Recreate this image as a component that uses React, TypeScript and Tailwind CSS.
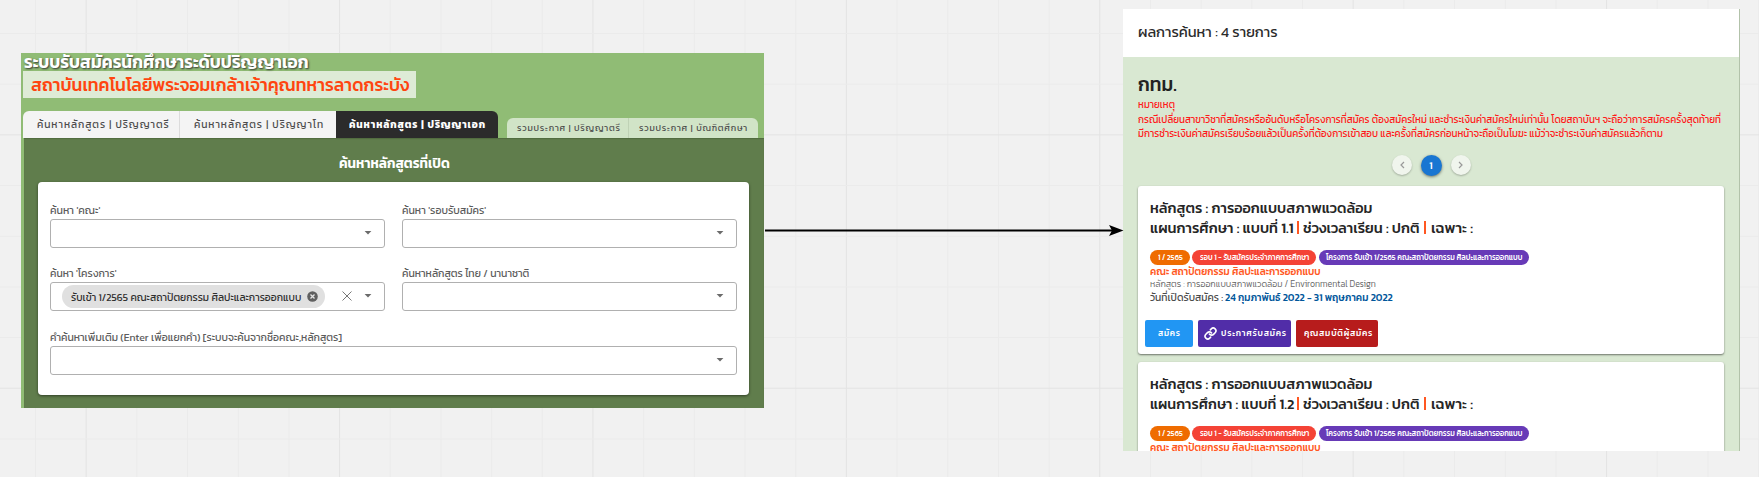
import { useLayoutEffect, useRef, useState, type ReactNode } from "react";

/* One line of text stretched to the width of its box. */
function Fit({ className, children }: { className: string; children: ReactNode }) {
  const box = useRef<HTMLSpanElement>(null);
  const text = useRef<HTMLSpanElement>(null);
  const [scale, setScale] = useState(1);
  useLayoutEffect(() => {
    if (box.current && text.current) {
      setScale(box.current.clientWidth / text.current.offsetWidth);
    }
  }, []);
  return (
    <span ref={box} className={`block shrink-0 whitespace-nowrap ${className}`}>
      <span ref={text} className="inline-block origin-left" style={{ transform: `scaleX(${scale})` }}>
        {children}
      </span>
    </span>
  );
}

const STEP = 50.68;

function CanvasGrid() {
  const xs = Array.from({ length: 36 }, (_, i) => i);
  const ys = Array.from({ length: 10 }, (_, i) => i);
  return (
    <svg className="absolute inset-0" width="1759" height="477" fill="none">
      {xs.map((i) => (
        <path key={i} d={`M${35.5 + (i * STEP)} 0V477`} stroke={i % 5 === 1 ? "#e3e3e3" : "#ebebeb"} />
      ))}
      {ys.map((i) => (
        <path key={i} d={`M0 ${33.5 + (i * STEP)}H1759`} stroke={i % 5 === 2 ? "#e3e3e3" : "#ebebeb"} />
      ))}
    </svg>
  );
}

function Caret() {
  return (
    <svg width="8" height="4" viewBox="0 0 8 4" className="mb-[2px] shrink-0">
      <path d="M0.6 0H7.4L4 3.6Z" fill="#6b6b6b" />
    </svg>
  );
}

function Field({ label, labelWidth, className, children }: { label: string; labelWidth: string; className: string; children?: ReactNode }) {
  return (
    <div className={className}>
      <Fit className={`h-[18px] text-[11px] leading-[18px] text-[#5c5c5c] ${labelWidth}`}>{label}</Fit>
      <div className="flex h-[29px] items-center justify-end rounded-[3px] border border-[#b0b0b0] pr-[12px]">
        {children}
        <Caret />
      </div>
    </div>
  );
}

function SearchPanel() {
  return (
    <section className="mt-[53px] ml-[21px] h-[355px] w-[743px] shrink-0 overflow-hidden bg-[#90bc75]">
      <div className="h-[18px] pl-[3px]">
        <Fit className="w-[285px] text-[18px] leading-[17px] font-semibold text-white [text-shadow:1px_1px_2px_#333]">
          ระบบรับสมัครนักศึกษาระดับปริญญาเอก
        </Fit>
      </div>
      <div className="ml-[2px] h-[27px] w-[393px] bg-[#deebd6] pl-[8px]">
        <Fit className="w-[378px] text-[18px] leading-[27px] font-medium text-[#ff4510]">
          สถาบันเทคโนโลยีพระจอมเกล้าเจ้าคุณทหารลาดกระบัง
        </Fit>
      </div>
      <div className="mt-[13px] ml-[2px] flex h-[27px] items-end">
        <div className="flex h-[27px] overflow-hidden rounded-t-[6px] text-[11px] leading-[27px] tracking-[1px] text-[#4c4c4c]">
          <div className="w-[157px] border-r border-[#dcdcdc] bg-[#f4f4f4] pl-[13.5px]">
            <Fit className="w-[133px]">ค้นหาหลักสูตร | ปริญญาตรี</Fit>
          </div>
          <div className="w-[156px] bg-[#f4f4f4] pl-[14px]">
            <Fit className="w-[130px]">ค้นหาหลักสูตร | ปริญญาโท</Fit>
          </div>
          <div className="w-[162px] bg-[#2b2b2b] pl-[13px] font-bold text-white">
            <Fit className="w-[137px]">ค้นหาหลักสูตร | ปริญญาเอก</Fit>
          </div>
        </div>
        <div className="ml-[9px] flex h-[20px] overflow-hidden rounded-t-[6px] bg-[#d1e4c7] text-[9px] leading-[20px] tracking-[0.8px] text-[#4c4c4c]">
          <div className="w-[122px] border-r border-[#bfd2b5] pl-[10px]">
            <Fit className="w-[104px]">รวมประกาศ | ปริญญาตรี</Fit>
          </div>
          <div className="w-[129px] pl-[10px]">
            <Fit className="w-[109px]">รวมประกาศ | บัณฑิตศึกษา</Fit>
          </div>
        </div>
      </div>
      <div className="ml-[3px] h-[270px] bg-[#607d4c] px-[14px] shadow-[inset_0_1px_1px_#526c40]">
        <div className="flex h-[44px] items-center justify-center pt-[7px] text-white">
          <Fit className="w-[111px] text-[14px] leading-[20px] font-semibold">ค้นหาหลักสูตรที่เปิด</Fit>
        </div>
        <div className="h-[213px] w-[711px] rounded-[4px] bg-white px-[12px] pt-[19px] shadow-[0_1px_3px_rgba(0,0,0,0.5)]">
          <div className="flex justify-between">
            <Field className="w-[335px]" labelWidth="w-[50px]" label="ค้นหา 'คณะ'" />
            <Field className="w-[335px]" labelWidth="w-[84px]" label="ค้นหา 'รอบรับสมัคร'" />
          </div>
          <div className="mt-[16px] flex justify-between">
            <Field className="w-[335px]" labelWidth="w-[67px]" label="ค้นหา 'โครงการ'">
              <div className="flex h-[23px] w-[263px] items-center rounded-full bg-[#e0e0e0] pl-[9px]">
                <Fit className="w-[230px] text-[11px] leading-[22px] text-[#303030]">
                  รับเข้า 1/2565 คณะสถาปัตยกรรม ศิลปะและการออกแบบ
                </Fit>
                <svg width="11" height="11" viewBox="0 0 11 11" className="ml-[6px]">
                  <circle cx="5.5" cy="5.5" r="5.3" fill="#606060" />
                  <path d="M3.5 3.5l4 4M7.500 3.5l-4 4" stroke="#e6e6e6" strokeWidth="1.3" />
                </svg>
              </div>
              <svg width="10" height="10" viewBox="0 0 10 10" className="mr-[12px] mb-[2px] ml-[17px] shrink-0">
                <path d="M0.500 0.500l9 9M9.500 0.500l-9 9" stroke="#777" />
              </svg>
            </Field>
            <Field className="w-[335px]" labelWidth="w-[127px]" label="ค้นหาหลักสูตร ไทย / นานาชาติ" />
          </div>
          <Field
            className="mt-[17px]"
            labelWidth="w-[292px]"
            label="คำค้นหาเพิ่มเติม (Enter เพื่อแยกคำ) [ระบบจะค้นจากชื่อคณะ,หลักสูตร]"
          />
        </div>
      </div>
    </section>
  );
}

function Connector() {
  return (
    <svg width="360" height="13" viewBox="0 0 360 13" className="relative mt-[224px] -mr-px shrink-0">
      <path d="M1 6.500H350" stroke="#000" strokeWidth="2.2" />
      <path d="M345 1L359.500 6.500L345 12L348 6.500Z" fill="#000" />
    </svg>
  );
}

function Divider() {
  return <span className="h-[13px] w-[2px] bg-[#ff5722]" />;
}

function Program({ plan }: { plan: string }) {
  return (
    <article className="h-[168px] w-[586px] shrink-0 rounded-[3px] bg-white pt-[12px] pl-[12px] shadow-[0_1px_2px_rgba(0,0,0,0.5)]">
      <div className="text-[15px] leading-[19.5px] font-medium text-[#262626]">
        <Fit className="w-[222px]">หลักสูตร : การออกแบบสภาพแวดล้อม</Fit>
        <div className="flex items-center">
          <Fit className="w-[144px]">แผนการศึกษา : แบบที่ {plan}</Fit>
          <span className="w-[3px]" />
          <Divider />
          <span className="w-[4px]" />
          <Fit className="w-[117px]">ช่วงเวลาเรียน : ปกติ</Fit>
          <span className="w-[4px]" />
          <Divider />
          <span className="w-[5px]" />
          <Fit className="w-[42px]">เฉพาะ :</Fit>
        </div>
      </div>
      <div className="mt-[13px] flex text-[8px] leading-[15px] font-medium text-white">
        <span className="h-[15px] w-[40px] rounded-full bg-[#ef6c00] pl-[8px]">
          <Fit className="w-[25px]">1 / 2565</Fit>
        </span>
        <span className="ml-[2px] h-[15px] w-[124px] rounded-full bg-[#f44336] pl-[8px]">
          <Fit className="w-[109px]">รอบ 1 - รับสมัครประจำภาคการศึกษา</Fit>
        </span>
        <span className="ml-[3px] h-[15px] w-[210px] rounded-full bg-[#673ab7] pl-[7px]">
          <Fit className="w-[196px]">โครงการ รับเข้า 1/2565 คณะสถาปัตยกรรม ศิลปะและการออกแบบ</Fit>
        </span>
      </div>
      <Fit className="w-[171px] text-[11px] leading-[13px] font-medium text-[#ff5722]">คณะ สถาปัตยกรรม ศิลปะและการออกแบบ</Fit>
      <Fit className="w-[226px] text-[9.5px] leading-[13px] font-light text-[#666]">
        หลักสูตร : การออกแบบสภาพแวดล้อม / Environmental Design
      </Fit>
      <div className="flex text-[10.5px] leading-[13px] text-[#4c4c4c]">
        <Fit className="w-[73px]">วันที่เปิดรับสมัคร :</Fit>
        <Fit className="ml-[2px] w-[168px] font-medium text-[#01579b]">24 กุมภาพันธ์ 2022 - 31 พฤษภาคม 2022</Fit>
      </div>
      <div className="mt-[16px] -ml-[5px] flex text-[9px] leading-[27px] font-medium tracking-[0.8px] text-white">
        <div className="h-[27px] w-[48px] rounded-[2px] bg-[#2196f3] pl-[13px]">
          <Fit className="w-[23px]">สมัคร</Fit>
        </div>
        <div className="ml-[5px] flex h-[27px] w-[93px] items-center rounded-[2px] bg-[#512da8] pl-[6px]">
          <svg width="13" height="13" viewBox="0 0 24 24" fill="none" stroke="#fff" strokeWidth="3" strokeLinecap="round">
            <path d="M10 13a5 5 0 0 0 7.540.54l3-3a5 5 0 0 0-7.070-7.070l-1.720 1.710" />
            <path d="M14 11a5 5 0 0 0-7.540-.54l-3 3a5 5 0 0 0 7.070 7.070l1.710-1.710" />
          </svg>
          <Fit className="ml-[4px] w-[66px]">ประกาศรับสมัคร</Fit>
        </div>
        <div className="ml-[5px] h-[27px] w-[82px] rounded-[2px] bg-[#b71c1c] pl-[8px]">
          <Fit className="w-[69px]">คุณสมบัติผู้สมัคร</Fit>
        </div>
      </div>
    </article>
  );
}

function PageArrow({ d }: { d: string }) {
  return (
    <span className="flex size-[20px] items-center justify-center rounded-full bg-[#f0f5ed] shadow-[0_1px_2px_rgba(0,0,0,0.25)]">
      <svg width="6" height="8" viewBox="0 0 6 8" fill="none" stroke="#999" strokeWidth="1.2">
        <path d={d} />
      </svg>
    </span>
  );
}

function ResultsPanel() {
  return (
    <section className="mt-[9px] h-[442px] w-[617px] shrink-0 overflow-hidden border-r border-[#b2c2aa] bg-[#d9e8d2]">
      <header className="h-[48px] bg-white pl-[15px]">
        <Fit className="w-[140px] text-[15px] leading-[45px] text-[#2c2c2c]">ผลการค้นหา : 4 รายการ</Fit>
      </header>
      <div className="pl-[15px]">
        <Fit className="mt-[14px] w-[39px] text-[20px] leading-[27px] font-medium text-[#222]">กทม.</Fit>
        <div className="text-[10px] leading-[14.5px] text-[#ff1a1a]">
          <Fit className="w-[37px]">หมายเหตุ</Fit>
          <Fit className="w-[583px]">
            กรณีเปลี่ยนสาขาวิชาที่สมัครหรืออันดับหรือโครงการที่สมัคร ต้องสมัครใหม่ และชำระเงินค่าสมัครใหม่เท่านั้น โดยสถาบันฯ จะถือว่าการสมัครครั้งสุดท้ายที่
          </Fit>
          <Fit className="w-[525px]">
            มีการชำระเงินค่าสมัครเรียบร้อยแล้วเป็นครั้งที่ต้องการเข้าสอบ และครั้งที่สมัครก่อนหน้าจะถือเป็นโมฆะ แม้ว่าจะชำระเงินค่าสมัครแล้วก็ตาม
          </Fit>
        </div>
        <div className="flex h-[44.5px] w-[586px] items-center justify-center gap-[9px] pt-[3px]">
          <PageArrow d="M5 1L2 4L5 7" />
          <span className="flex size-[21px] items-center justify-center rounded-full bg-[#1976d2] text-[10px] font-medium text-white shadow-[0_1px_3px_rgba(0,0,0,0.5)]">
            1
          </span>
          <PageArrow d="M1 1L4 4L1 7" />
        </div>
        <div className="flex flex-col gap-[8px]">
          <Program plan="1.1" />
          <Program plan="1.2" />
        </div>
      </div>
    </section>
  );
}

export default function App() {
  return (
    <main className="relative h-[477px] w-[1759px] overflow-hidden bg-[#f1f1f1] font-['Kanit','Noto_Sans_Thai','Noto_Sans',sans-serif]">
      <CanvasGrid />
      <div className="relative flex items-start">
        <SearchPanel />
        <Connector />
        <ResultsPanel />
      </div>
    </main>
  );
}
